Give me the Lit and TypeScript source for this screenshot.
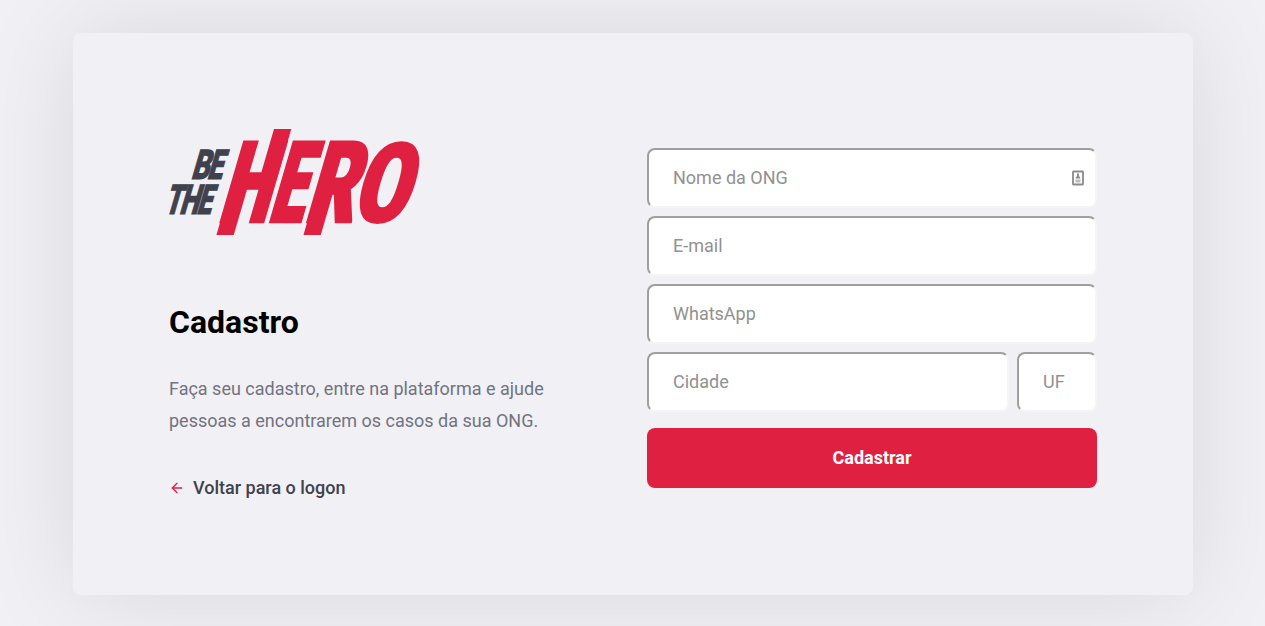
import { LitElement, html, css, svg } from "lit";
import { customElement } from "lit/decorators.js";

// [letter, left x on the baseline, baseline y, advance width, font size]
type Glyph = [string, number, number, number, number];

const HERO: Glyph[] = [
  ["H", 48.6, 93, 49, 113],
  ["E", 98.5, 93, 33.6, 113],
  ["R", 135, 93, 48, 113],
];
const ROUND: Glyph[] = [["O", 180.3, 92, 58, 105.5]];
const SMALL: Glyph[] = [
  ["B", 21.6, 50.4, 18, 41],
  ["E", 37.5, 50.4, 15, 41],
  ["T", -5.2, 84.6, 16.5, 41],
  ["H", 9.8, 84.6, 19, 41],
  ["E", 27, 84.6, 14.5, 41],
];

const glyph = ([ch, x, y, w, size]: Glyph) => svg`
  <text font-size=${size} textLength=${w} lengthAdjust="spacingAndGlyphs"
    transform="translate(${x} ${y}) skewX(-16.3)">${ch}</text>`;

@customElement("hero-logo")
export class HeroLogo extends LitElement {
  static styles = css`
    :host { display: block; height: 110px; }
    svg { display: block; overflow: visible; }
    text { font-family: Roboto, sans-serif; font-weight: 900; }
    .red { fill: #e02041; stroke: #e02041; stroke-width: 2.4; }
    .round text { font-family: "DejaVu Sans Mono", monospace; font-weight: 700; stroke-width: 3; }
    .dark { fill: #41414d; stroke: #41414d; stroke-width: 1.1; }
  `;
  render() {
    return html`<svg width="250" height="106" viewBox="0 0 250 106" role="img" aria-label="Be The Hero">
      <defs>
        <filter id="bold" color-interpolation-filters="sRGB">
          <feMorphology operator="dilate" radius="1 0" />
        </filter>
      </defs>
      <g class="dark">${SMALL.map(glyph)}</g>
      <g class="red" filter="url(#bold)">${HERO.map(glyph)}</g>
      <g class="red round">${ROUND.map(glyph)}</g>
      <g fill="#e02041">
        <rect width="17.3" height="50" transform="translate(105 0) skewX(-16.3)" />
        <rect width="17.3" height="56" transform="translate(63.8 50) skewX(-16.3)" />
        <rect width="17.3" height="46" transform="translate(147.9 60) skewX(-16.3)" />
      </g>
    </svg>`;
  }
}

@customElement("app-root")
export class AppRoot extends LitElement {
  static styles = css`
    :host {
      display: block;
      box-sizing: border-box;
      height: 626px;
      padding: 32.6px 0 0 1px;
      overflow: hidden;
      background: #f0f0f5;
      font: 400 14px Roboto, sans-serif;
      -webkit-font-smoothing: antialiased;
    }
    * { box-sizing: border-box; }
    .card {
      width: 1120px;
      height: 562px;
      margin: 0 auto;
      padding: 96px;
      display: flex;
      justify-content: space-between;
      align-items: center;
      background: #f0f0f5;
      border-radius: 8px;
      box-shadow: 0 0 100px rgba(0, 0, 0, 0.1);
    }
    .intro { width: 380px; }
    h1 { margin: 64px 0 32px; font-size: 32px; line-height: 38px; font-weight: 700; color: #000; }
    p { margin: 0; font-size: 18px; line-height: 32px; color: #737380; }
    .back {
      display: flex;
      align-items: center;
      margin-top: 40px;
      height: 21px;
      font-size: 18px;
      font-weight: 500;
      color: #41414d;
      text-decoration: none;
    }
    .back svg { margin-right: 8px; }
    form { width: 450px; padding-top: 8px; display: flex; flex-direction: column; gap: 8px; }
    .row { display: flex; gap: 8px; }
    .field {
      display: flex;
      align-items: center;
      height: 60px;
      padding: 0 11px 0 24px;
      background: #fff;
      border: 2px solid;
      border-color: #9f9f9f #f5f5f7 #f5f5f7 #9f9f9f;
      border-radius: 8px;
    }
    .city { flex: 1; }
    .uf { width: 80px; }
    input {
      flex: 1;
      min-width: 0;
      padding: 0;
      border: 0;
      outline: 0;
      background: none;
      font: 400 18px Roboto, sans-serif;
      color: #333;
    }
    input::placeholder { color: #919191; opacity: 1; }
    button {
      height: 60px;
      margin-top: 8px;
      border: 0;
      border-radius: 8px;
      background: #e02041;
      color: #fff;
      font: 700 18px Roboto, sans-serif;
    }
  `;

  render() {
    return html`<main class="card">
      <section class="intro">
        <hero-logo></hero-logo>
        <h1>Cadastro</h1>
        <p>Faça seu cadastro, entre na plataforma e ajude pessoas a encontrarem os casos da sua ONG.</p>
        <a class="back" href="#">
          <svg width="16" height="16" viewBox="0 0 24 24" fill="none" stroke="#e02041"
            stroke-width="2" stroke-linecap="round" stroke-linejoin="round">
            <line x1="19" y1="12" x2="5" y2="12" /><polyline points="12 19 5 12 12 5" />
          </svg>Voltar para o logon</a>
      </section>
      <form>
        <label class="field"><input placeholder="Nome da ONG" />
          <svg width="12" height="16" viewBox="0 0 12 16">
            <rect x="1" y="1.5" width="10" height="13" rx="0.5" fill="#fff" stroke="#8b8b8b" stroke-width="1.8" />
            <path d="M5 3.5h2v2.5l1.2 1.5v1H3.8v-1L5 6z" fill="#8b8b8b" />
            <path d="M3.5 9.5h5v3h-5z" fill="#bdbdbd" />
          </svg>
        </label>
        <label class="field"><input placeholder="E-mail" /></label>
        <label class="field"><input placeholder="WhatsApp" /></label>
        <div class="row">
          <label class="field city"><input placeholder="Cidade" /></label>
          <label class="field uf"><input placeholder="UF" /></label>
        </div>
        <button type="button">Cadastrar</button>
      </form>
    </main>`;
  }
}
